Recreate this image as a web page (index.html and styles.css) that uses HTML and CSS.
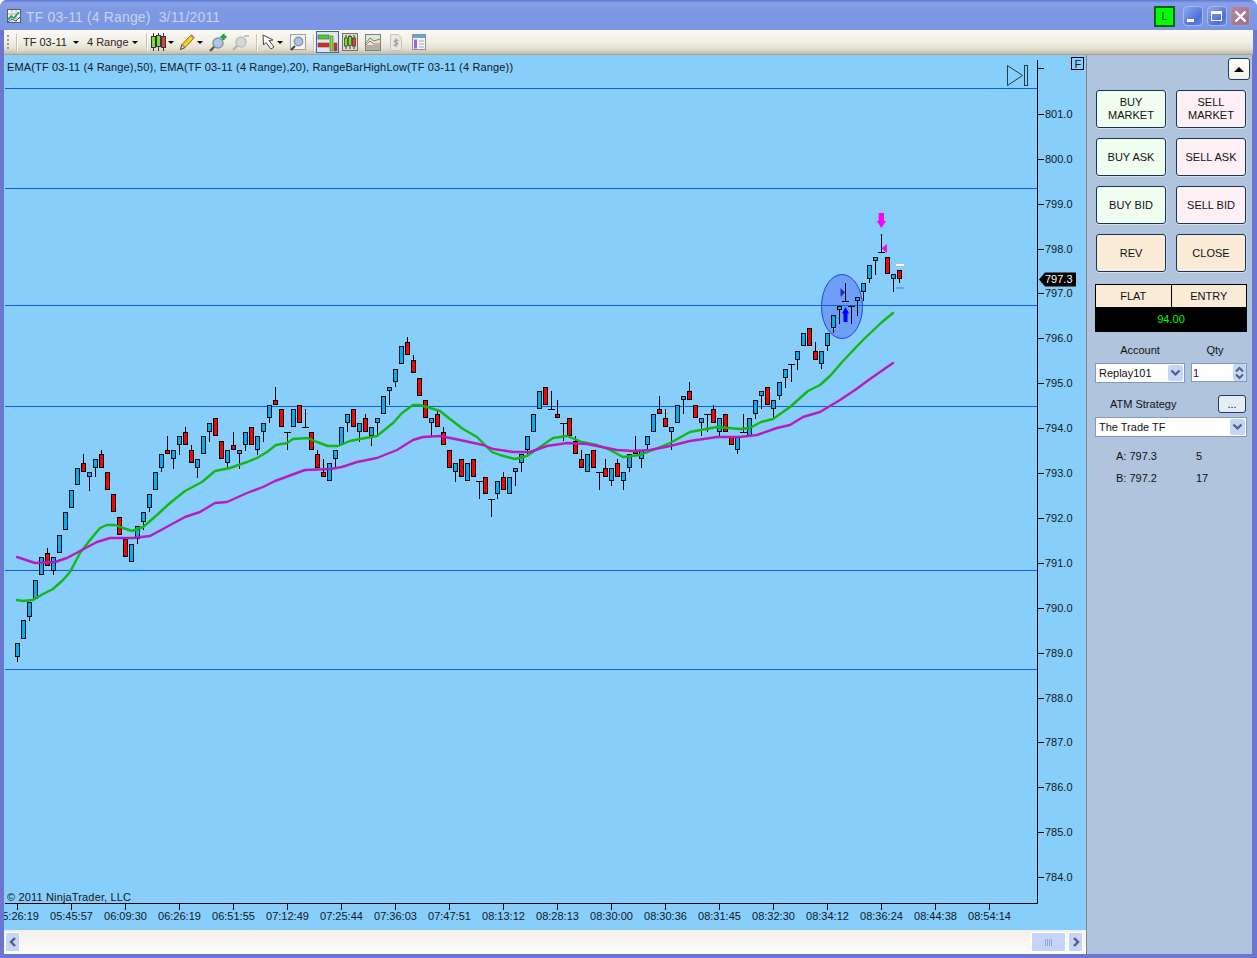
FILE: index.html
```html
<!DOCTYPE html>
<html lang="en">

<head>
    <meta charset="UTF-8">
    <title>TF 03-11 (4 Range) 3/11/2011</title>
    <link rel="stylesheet" href="styles.css">
</head>

<body>
    <div class="window">
        <div class="titleBar">
            <svg class="titleIcon" width="14" height="14" viewBox="0 0 14 14">
                <rect x="0.5" y="0.5" width="13" height="13" fill="#f4f4f0" stroke="#55606a" />
                <path d="M1 5H13M1 9H13M5 1V13M9 1V13" stroke="#b0b4c0" stroke-width="1" />
                <path d="M1 11L4 7L7 9L12 3" fill="none" stroke="#18a040" stroke-width="1.5" />
                <path d="M1 13L5 10L9 12L13 8" fill="none" stroke="#3050c0" stroke-width="1" />
            </svg>
            <span class="titleText">TF 03-11 (4 Range)&nbsp;&nbsp;3/11/2011</span>
            <div class="liveBox">L</div>
            <div class="captionBtn">
                <span class="minGlyph"></span>
            </div>
            <div class="captionBtn">
                <span class="maxGlyph"></span>
            </div>
            <div class="captionBtn closeBtn">
                <svg width="13" height="13" viewBox="0 0 13 13">
                    <path d="M1.5 1.5L11.5 11.5M11.5 1.5L1.5 11.5" stroke="#fff" stroke-width="2.4" />
                </svg>
            </div>
        </div>

        <div class="toolBar">
            <div class="grip"></div>
            <div class="toolSep sepFirst"></div>
            <span class="toolText instrument">TF 03-11</span>
            <span class="dropArrow"></span>
            <span class="toolText rangeText">4 Range</span>
            <span class="dropArrow"></span>
            <div class="toolSep sepSecond"></div>

            <svg class="tool candleTool" width="15" height="18" viewBox="0 0 15 18">
                <path d="M2.5 0V18M7.5 0V18M12.5 0V18" stroke="#333" />
                <rect x="0.5" y="3.5" width="4" height="11" fill="#7ce028" stroke="#335" />
                <rect x="5.5" y="2.5" width="4" height="11" fill="#7ce028" stroke="#335" />
                <rect x="10.5" y="3.5" width="4" height="11" fill="#e84020" stroke="#335" />
            </svg>
            <span class="dropArrow iconArrow"></span>

            <svg class="tool pencilTool" width="15" height="16" viewBox="0 0 15 16">
                <path d="M0.5 15.5L2 10.5L11 1L14 4L5 13.5Z" fill="#f8d020" stroke="#8a7410" />
                <path d="M0.5 15.5L2 10.5L5 13.5Z" fill="#f4dcb0" stroke="#555" />
                <path d="M11 1L14 4" stroke="#e07070" stroke-width="2" />
            </svg>
            <span class="dropArrow iconArrow"></span>

            <svg class="tool zoomInTool" width="18" height="19" viewBox="0 0 18 19">
                <path d="M1 18L6 13" stroke="#555" stroke-width="2.4" />
                <circle cx="9" cy="10" r="5" fill="#a8c8ee" stroke="#8a96a6" stroke-width="1.5" />
                <path d="M14.5 1V7M11.5 4H17.5" stroke="#10a830" stroke-width="2.4" />
            </svg>
            <svg class="tool zoomOutTool" width="17" height="17" viewBox="0 0 17 17">
                <path d="M1 16L6 11" stroke="#b4b4ae" stroke-width="2.4" />
                <circle cx="9" cy="8" r="5" fill="#d4d8d8" stroke="#c0c0ba" stroke-width="1.5" />
                <path d="M12 2H17" stroke="#c0c0ba" stroke-width="2" />
            </svg>
            <div class="toolSep sepThird"></div>

            <svg class="tool pointerTool" width="15" height="16" viewBox="0 0 15 16">
                <path d="M1 1L1.5 11L4 8.5L9 15L12 13L7 6.5L11 6Z" fill="#fff" stroke="#444" />
            </svg>
            <span class="dropArrow iconArrow"></span>

            <svg class="tool magnifyTool" width="16" height="17" viewBox="0 0 16 17">
                <rect x="0.5" y="0.5" width="15" height="15" fill="#f4f4f0" stroke="#a0a098" />
                <path d="M1 16L5 12" stroke="#444" stroke-width="2" />
                <circle cx="8.5" cy="7.5" r="4.2" fill="#a8c4ec" stroke="#8a96a6" stroke-width="1.4" />
            </svg>
            <div class="toolSep sepFourth"></div>

            <div class="toolSelected">
                <svg width="21" height="20" viewBox="0 0 21 20">
                    <rect x="1" y="3" width="11" height="4" fill="#40d030" stroke="#555" stroke-width="0.6" />
                    <rect x="1" y="11" width="11" height="4" fill="#e82020" stroke="#555" stroke-width="0.6" />
                    <rect x="13" y="4" width="3" height="15" fill="#7ce028" stroke="#555" stroke-width="0.6" />
                    <rect x="17" y="11" width="3" height="8" fill="#e82020" stroke="#555" stroke-width="0.6" />
                </svg>
            </div>
            <svg class="tool boxCandles" width="16" height="18" viewBox="0 0 16 18">
                <rect x="0.5" y="0.5" width="15" height="17" fill="#dcdcd4" stroke="#707068" />
                <path d="M4 2V16M8 2V16M12 2V16" stroke="#333" />
                <rect x="2.5" y="5" width="3" height="8" fill="#7ce028" stroke="#333" stroke-width="0.7" />
                <rect x="6.5" y="3.5" width="3" height="9" fill="#7ce028" stroke="#333" stroke-width="0.7" />
                <rect x="10.5" y="5" width="3" height="8" fill="#e84020" stroke="#333" stroke-width="0.7" />
            </svg>
            <svg class="tool boxLines" width="16" height="17" viewBox="0 0 16 17">
                <rect x="0.5" y="0.5" width="15" height="16" fill="#e4e4dc" stroke="#808078" />
                <rect x="1" y="11" width="14" height="5" fill="#b0b0a8" />
                <path d="M1 9L5 4L9 7L15 5" fill="none" stroke="#30b050" />
                <path d="M1 11L5 7L9 10L15 10" fill="none" stroke="#e06060" />
            </svg>
            <svg class="tool docTool" width="12" height="17" viewBox="0 0 12 17">
                <path d="M0.5 0.5H8L11.5 4V16.5H0.5Z" fill="#e8e8e2" stroke="#c4c4bc" />
                <path d="M8.5 6.5C5 5.5 3 7.5 6 8.5C9 9.5 7.5 12 3.5 11M6 4.5V13" fill="none" stroke="#a8a8a2" stroke-width="1.5" />
            </svg>
            <svg class="tool propsTool" width="14" height="16" viewBox="0 0 14 16">
                <rect x="0.5" y="0.5" width="13" height="15" fill="#f4f4f4" stroke="#8a92a0" />
                <rect x="1" y="1" width="12" height="3" fill="#60a8d8" />
                <rect x="2" y="5.5" width="3" height="9" fill="#a060e0" />
                <path d="M7 7H12M7 10H12M7 13H12" stroke="#a0a8b4" />
            </svg>
        </div>

        <div class="mainArea">
            <div class="chartColumn">
                <svg class="chart" width="1082" height="875" viewBox="4 55 1082 875">
                    <ellipse cx="842" cy="306.5" rx="20.5" ry="32" fill="#6e9ff6" stroke="#2444e0" stroke-width="1" />
                    <g id="levelLines"></g>
                    <g id="candles"></g>
                    <polyline class="emaGreen" id="emaGreen" points="" />
                    <polyline class="emaPurple" id="emaPurple" points="" />

                    <!-- signals -->
                    <path d="M843.5 322V313.5H842L845.5 307L849 313.5H847.5V322Z" fill="#0000ff" />
                    <path d="M840.5 288L845 292.5L840.5 297Z" fill="#1a2ccc" />
                    <path d="M878.7 213H884V221H886L881.4 228L876.8 221H878.7Z" fill="#ff00ff" />
                    <path d="M887 244V253L881.5 248.5Z" fill="#ff00ff" />
                    <rect x="896" y="264" width="8" height="2" fill="#fff" />
                    <rect x="896" y="287" width="8" height="2" fill="#6f9ff0" />

                    <text class="chartText legendText" x="7" y="71">EMA(TF 03-11 (4 Range),50), EMA(TF 03-11 (4 Range),20), RangeBarHighLow(TF 03-11 (4 Range))</text>
                    <text class="chartText legendText" x="7" y="901">© 2011 NinjaTrader, LLC</text>

                    <!-- skip to end + F box -->
                    <path d="M1007.5 65.5L1022.5 75.5L1007.5 85.5Z" fill="none" stroke="#1c3c50" />
                    <rect x="1024.5" y="65.5" width="3" height="20" fill="none" stroke="#1c3c50" />
                    <rect x="1071.5" y="57.5" width="12" height="12" fill="none" stroke="#000" />
                    <text class="chartText" x="1074.5" y="67.5" font-size="10">F</text>

                    <path d="M1037.5 60V903.5H5" fill="none" stroke="#000" />
                    <g id="priceAxis"></g>
                    <g id="timeAxis"></g>

                    <path d="M1039 279.5L1045 272.5H1076V286.5H1045Z" fill="#000" />
                    <text class="flagText" x="1045" y="283">797.3</text>
                </svg>
                <div class="scrollBar">
                    <div class="scrollBtn">
                        <svg width="8" height="10" viewBox="0 0 8 10">
                            <path d="M6 1L2 5L6 9" fill="none" stroke="#4d6185" stroke-width="2.4" />
                        </svg>
                    </div>
                    <div class="scrollThumb">
                        <svg width="10" height="7" viewBox="0 0 10 7">
                            <path d="M1.5 0V7M3.5 0V7M5.5 0V7M7.5 0V7" stroke="#8fa3d8" />
                        </svg>
                    </div>
                    <div class="scrollBtn scrollRight">
                        <svg width="8" height="10" viewBox="0 0 8 10">
                            <path d="M2 1L6 5L2 9" fill="none" stroke="#4d6185" stroke-width="2.4" />
                        </svg>
                    </div>
                </div>
            </div>

            <div class="sidePanel">
                <div class="collapseRow">
                    <div class="collapseBtn"><span class="upGlyph"></span></div>
                </div>
                <div class="orderGrid">
                    <div class="orderBtn buy">BUY<br>MARKET</div>
                    <div class="orderBtn sell">SELL<br>MARKET</div>
                    <div class="orderBtn buy">BUY ASK</div>
                    <div class="orderBtn sell">SELL ASK</div>
                    <div class="orderBtn buy">BUY BID</div>
                    <div class="orderBtn sell">SELL BID</div>
                    <div class="orderBtn misc">REV</div>
                    <div class="orderBtn misc">CLOSE</div>
                </div>

                <div class="positionBox">
                    <div class="positionHead">
                        <div class="posCell">FLAT</div>
                        <div class="posCell">ENTRY</div>
                    </div>
                    <div class="positionPnl">94.00</div>
                </div>

                <div class="labelRow">
                    <div class="accountLabel">Account</div>
                    <div class="qtyLabel">Qty</div>
                </div>
                <div class="fieldRow">
                    <div class="combo accountCombo">
                        <span class="comboText">Replay101</span>
                        <span class="comboArrow">
                            <svg width="11" height="8" viewBox="0 0 11 8">
                                <path d="M1.5 1.5L5.5 5.5L9.5 1.5" fill="none" stroke="#4d6185" stroke-width="2.2" />
                            </svg>
                        </span>
                    </div>
                    <div class="combo qtyCombo">
                        <span class="comboText qtyText">1</span>
                        <span class="spinArrows">
                            <svg width="11" height="16" viewBox="0 0 11 16">
                                <path d="M2 6.5L5.5 3L9 6.5M2 9.5L5.5 13L9 9.5" fill="none" stroke="#4d6185" stroke-width="2" />
                            </svg>
                        </span>
                    </div>
                </div>

                <div class="atmRow">
                    <div class="atmLabel">ATM Strategy</div>
                    <div class="moreBtn">...</div>
                </div>
                <div class="combo atmCombo">
                    <span class="comboText">The Trade TF</span>
                    <span class="comboArrow">
                        <svg width="11" height="8" viewBox="0 0 11 8">
                            <path d="M1.5 1.5L5.5 5.5L9.5 1.5" fill="none" stroke="#4d6185" stroke-width="2.2" />
                        </svg>
                    </span>
                </div>

                <div class="quoteBlock">
                    <div class="quoteRow"><span class="quotePrice">A: 797.3</span><span>5</span></div>
                    <div class="quoteRow"><span class="quotePrice">B: 797.2</span><span>17</span></div>
                </div>
            </div>
        </div>
    </div>

    <script src="chart.js"></script>
</body>

</html>
```

FILE: styles.css
```css
html,
body {
    margin: 0;
    padding: 0;
    background: #fff;
    overflow: hidden;
}

body {
    font-family: "Liberation Sans", Arial, sans-serif;
    font-size: 11px;
    color: #111;
}

.window {
    width: 1257px;
    height: 958px;
    box-sizing: border-box;
    padding: 0 4px 4px;
    display: flex;
    flex-direction: column;
    background: #6a76d0;
    border-radius: 7px 7px 0 0;
}

.titleBar {
    height: 30px;
    box-sizing: border-box;
    margin: 0 -4px;
    padding: 2px 7px 0;
    display: flex;
    align-items: center;
    flex: none;
    border-radius: 7px 7px 0 0;
    background: linear-gradient(#5c78d8 0, #88a2e8 3px, #7e99e2 10px, #7b97e4 100%);
}

.titleIcon {
    margin-right: 5px;
    flex: none;
}

.titleText {
    margin-top: 2px;
    font-size: 14px;
    letter-spacing: 0.15px;
    color: #c6d3f2;
    white-space: nowrap;
    flex: 1;
}

.liveBox {
    width: 21px;
    height: 21px;
    box-sizing: border-box;
    margin-right: 4.5px;
    border: 2px solid #0b6014;
    background: #00ff00;
    color: #033;
    font-size: 11px;
    line-height: 17px;
    text-align: center;
}

.captionBtn {
    width: 20px;
    height: 20px;
    box-sizing: border-box;
    margin-left: 3.5px;
    display: flex;
    align-items: center;
    justify-content: center;
    position: relative;
    border: 1px solid #a6b8f0;
    border-radius: 4px;
    background: linear-gradient(135deg, #8ea8f0, #4f70d8 70%, #6a88e4);
}

.closeBtn {
    background: linear-gradient(135deg, #b08aa8, #a06e84);
    border-color: #a89ac0;
}

.minGlyph {
    width: 7px;
    height: 3px;
    background: #fff;
    align-self: flex-end;
    margin: 0 5px 3px 0;
}

.maxGlyph {
    width: 11px;
    height: 10px;
    box-sizing: border-box;
    border: 1px solid #fff;
    border-top-width: 3px;
}

.toolBar {
    height: 25px;
    flex: none;
    display: flex;
    align-items: center;
    box-sizing: border-box;
    padding-bottom: 1px;
    background: linear-gradient(#fbfaf6 0, #f2efe6 45%, #e4e0d2 75%, #c0bca8 96%, #8d8b7e 100%);
}

.grip {
    width: 2px;
    height: 15px;
    margin-left: 3px;
    background: repeating-linear-gradient(#9a9a90 0, #9a9a90 2px, transparent 2px, transparent 4px);
}

.toolSep {
    width: 1px;
    height: 17px;
    background: #fff;
    border-left: 1px solid #c8c4b4;
    flex: none;
}

.sepFirst {
    margin-left: 7px;
}

.sepSecond {
    margin-left: 8px;
}

.sepThird {
    margin-left: 7px;
}

.sepFourth {
    margin-left: 7px;
}

.toolText {
    white-space: nowrap;
    color: #222;
}

.instrument {
    margin-left: 5px;
    width: 45px;
}

.rangeText {
    margin-left: 8px;
    width: 40px;
    color: #322;
}

.dropArrow {
    width: 0;
    height: 0;
    margin-left: 5px;
    flex: none;
    border-left: 3px solid transparent;
    border-right: 3px solid transparent;
    border-top: 3px solid #000;
}

.iconArrow {
    margin-left: 2px;
}

.tool {
    flex: none;
}

.candleTool {
    margin-left: 3px;
}

.pencilTool {
    margin-left: 6px;
}

.zoomInTool {
    margin-left: 6px;
}

.zoomOutTool {
    margin-left: 5px;
}

.pointerTool {
    margin: 0 -2px 0 4px;
}

.magnifyTool {
    margin-left: 7px;
}

.toolSelected {
    width: 23px;
    height: 22px;
    box-sizing: border-box;
    margin-left: 1px;
    flex: none;
    display: flex;
    align-items: center;
    justify-content: center;
    border: 1px solid #2a6cc0;
    background: #e2e6ea;
}

.boxCandles {
    margin-left: 3px;
}

.boxLines {
    margin-left: 7px;
}

.docTool {
    margin-left: 9px;
}

.propsTool {
    margin-left: 10px;
}

.mainArea {
    flex: 1;
    display: flex;
    min-height: 0;
}

.chartColumn {
    width: 1082px;
    flex: none;
    display: flex;
    flex-direction: column;
}

.chart {
    display: block;
    background: #87cefa;
    flex: none;
}

.chartText {
    font-family: "Liberation Sans", Arial, sans-serif;
    font-size: 11px;
    fill: #10181c;
}

.legendText {
    letter-spacing: 0.155px;
}

.flagText {
    font-family: "Liberation Sans", Arial, sans-serif;
    font-size: 11px;
    fill: #fff;
}

.tickLine {
    stroke: #000;
    stroke-width: 1;
    shape-rendering: crispEdges;
}

.levelLine {
    stroke: #0a5ce0;
    stroke-width: 1;
    shape-rendering: crispEdges;
}

.emaGreen,
.emaPurple {
    fill: none;
    stroke-width: 2.4;
    stroke-linejoin: round;
    stroke-linecap: round;
}

.emaGreen {
    stroke: #12b814;
}

.emaPurple {
    stroke: #b81cc0;
}

.candleBody {
    stroke: #000;
    stroke-width: 1;
    shape-rendering: crispEdges;
}

.scrollBar {
    flex: 1;
    display: flex;
    align-items: center;
    padding: 0 3px 0 1px;
    box-sizing: border-box;
    background: linear-gradient(#f2f0e8, #faf9f5 70%, #fff);
}

.scrollBtn {
    width: 15px;
    height: 20px;
    box-sizing: border-box;
    display: flex;
    align-items: center;
    justify-content: center;
    border: 1px solid #fff;
    border-radius: 2px;
    background: #c6d4fa;
}

.scrollThumb {
    width: 35px;
    height: 20px;
    margin-left: auto;
    box-sizing: border-box;
    display: flex;
    align-items: center;
    justify-content: center;
    border: 1px solid #fff;
    border-radius: 2px;
    background: #c6d4fa;
}

.scrollRight {
    margin-left: 2px;
}

.sidePanel {
    width: 166px;
    flex: none;
    box-sizing: border-box;
    margin-right: 1px;
    padding: 3px 0 0 8px;
    border-left: 1px solid #7c8488;
    background: #b0c4de;
    color: #111;
}

.collapseRow {
    display: flex;
    justify-content: flex-end;
    padding-right: 2px;
}

.collapseBtn {
    width: 22px;
    height: 22px;
    box-sizing: border-box;
    display: flex;
    align-items: center;
    justify-content: center;
    border: 1px solid #1c3c60;
    border-radius: 3px;
    background: linear-gradient(#fff, #f4efe4);
}

.upGlyph {
    width: 0;
    height: 0;
    border-left: 5px solid transparent;
    border-right: 5px solid transparent;
    border-bottom: 5px solid #000;
}

.orderGrid {
    margin: 10px 0 0 1px;
    display: grid;
    grid-template-columns: 70px 70px;
    grid-auto-rows: 38px;
    gap: 10px;
}

.orderBtn {
    box-sizing: border-box;
    display: flex;
    align-items: center;
    justify-content: center;
    text-align: center;
    line-height: 13px;
    border: 1px solid #12365c;
    border-radius: 3px;
    box-shadow: 0 1px 0 #d4e0ee, 1px 0 0 #c8d6e8;
}

.buy {
    background: #f0fff0;
}

.sell {
    background: #fff0f5;
}

.misc {
    background: #faebd7;
}

.positionBox {
    width: 152px;
    margin-top: 12px;
    box-sizing: border-box;
    border: 1px solid #000;
}

.positionHead {
    display: flex;
    height: 22px;
    background: #faebd7;
}

.posCell {
    flex: 1;
    line-height: 22px;
    text-align: center;
}

.posCell + .posCell {
    border-left: 1px solid #000;
}

.positionPnl {
    height: 24px;
    line-height: 24px;
    text-align: center;
    background: #000;
    color: #00ff00;
}

.labelRow {
    display: flex;
    margin-top: 11px;
    line-height: 14px;
}

.accountLabel {
    width: 90px;
    text-align: center;
}

.qtyLabel {
    width: 62px;
    padding-right: 2px;
    box-sizing: border-box;
    text-align: center;
}

.fieldRow {
    display: flex;
    align-items: flex-start;
    margin-top: 6px;
    gap: 6px;
}

.combo {
    height: 20px;
    box-sizing: border-box;
    display: flex;
    align-items: center;
    border: 1px solid #7f9db9;
    background: #fff;
}

.comboText {
    flex: 1;
    padding-left: 3px;
    white-space: nowrap;
}

.comboArrow {
    width: 15px;
    height: 16px;
    margin-right: 1px;
    display: flex;
    align-items: center;
    justify-content: center;
    border-radius: 2px;
    background: #c6d4f6;
}

.accountCombo {
    width: 90px;
}

.qtyCombo {
    width: 56px;
    height: 19px;
}

.qtyText {
    padding-left: 1px;
    color: #406;
}

.spinArrows {
    width: 13px;
    height: 17px;
    display: flex;
    align-items: center;
    justify-content: center;
    border-radius: 2px;
    background: #c6d4f6;
}

.atmRow {
    display: flex;
    align-items: center;
    margin-top: 12px;
    height: 18px;
    padding-left: 15px;
}

.atmLabel {
    flex: 1;
}

.moreBtn {
    width: 28px;
    height: 18px;
    box-sizing: border-box;
    margin-right: 6px;
    border: 1px solid #1c3c60;
    border-radius: 3px;
    background: #e4ecf4;
    text-align: center;
    line-height: 16px;
}

.atmCombo {
    width: 152px;
    margin-top: 4px;
}

.quoteBlock {
    margin-top: 8px;
    padding-left: 21px;
}

.quoteRow {
    display: flex;
    height: 22px;
    align-items: center;
}

.quotePrice {
    width: 80px;
}
```

FILE: chart.js
```js
var NS = "http://www.w3.org/2000/svg";

// type, body top, body bottom, wick top, wick bottom (0 = none)
var bars = [
    "b 643 657 0 662", "b 620 639", "b 602 617 0 621", "b 580 599", "b 557 575",
    "r 553 566 548 0", "b 557 571 0 575", "b 535 553", "b 512 530", "b 490 508",
    "b 468 485", "r 463 472 454 0", "b 472 477 0 491", "b 459 468 0 477", "r 454 468 450 0",
    "r 472 490", "r 494 512", "r 517 535", "r 539 557", "b 544 562",
    "b 526 539 0 544", "b 512 522 0 530", "b 494 508 0 512", "b 472 490", "b 454 468 0 472",
    "r 450 454 436 0", "b 450 459 0 469", "b 436 445 0 455", "r 432 445 427 0", "r 450 463 445 0",
    "b 459 468 0 478", "b 436 454", "b 423 432 0 442", "r 418 436", "r 441 459",
    "b 450 463 0 468", "r 445 450 432 0", "b 450 454 0 469", "b 432 445 0 451", "r 427 445",
    "b 436 450 0 455", "b 423 432 0 442", "b 405 418 0 423", "r 400 405 387 0", "r 409 427",
    "d 432 432 0 450", "b 409 427", "r 405 423", "d 427 427 409 0", "r 432 450",
    "r 454 468 450 0", "r 472 477 459 0", "b 463 481", "b 450 459 0 468", "b 427 445",
    "b 414 423 0 432", "r 409 427", "b 423 432 0 442", "r 418 432 414 0", "b 427 436 0 446",
    "b 418 423 0 435", "b 396 414", "b 387 391 0 405", "b 369 382 0 387", "b 346 364",
    "r 342 355 337 0", "r 360 373 355 0", "r 378 396", "r 400 418", "b 418 423 0 436",
    "r 414 427 410 0", "r 432 445 427 0", "r 450 468", "b 463 472 0 482", "r 459 477",
    "b 463 481", "r 459 477", "d 481 481 0 499", "r 477 494", "d 499 499 0 517",
    "b 481 494 0 499", "r 477 490 472 0", "b 477 494", "b 468 472 0 486", "b 454 463 0 472",
    "b 436 450 0 454", "b 414 432", "b 391 409", "r 387 405", "d 409 409 391 0",
    "r 414 418 400 0", "d 423 423 0 441", "r 418 436", "r 441 454 436 0", "r 459 468 450 0",
    "b 454 472", "r 450 468", "d 472 472 0 490", "r 468 477 459 0", "b 468 481 0 486",
    "r 463 477 459 0", "b 472 481 0 490", "b 454 468 0 472", "r 450 454 436 0", "b 450 459 0 468",
    "b 436 445 0 450", "b 414 432", "r 409 414 396 0", "r 418 427 409 0", "b 427 432 0 450",
    "b 405 423", "b 396 400 0 414", "r 391 400 382 0", "r 405 418", "b 418 423 0 436",
    "d 414 414 0 432", "r 409 423 405 0", "b 418 432 0 436", "r 414 432", "r 436 445",
    "b 436 450 0 454", "d 432 432 414 0", "b 418 436", "b 400 414 0 419", "b 391 396 0 409",
    "r 387 405", "b 400 409 0 418", "b 382 396 0 400", "b 369 378 0 388", "d 364 364 0 382",
    "b 351 360 0 370", "b 333 346", "r 328 346", "r 351 360 342 0", "b 351 364 0 369",
    "b 333 346 0 351", "b 315 328 0 333", "b 306 310 0 324", "d 301 301 283 0", "d 306 306 0 324",
    "b 297 301 0 316", "b 283 292 0 301", "b 265 279 0 283", "b 257 261 0 275", "d 252 252 234 0",
    "r 257 274", "b 274 279 0 292", "r 270 279 0 283"
];

var greenLine = [
    [17, 600], [23, 601], [33, 600], [43, 594], [53, 589], [63, 580], [70, 572], [80, 553], [90, 540],
    [100, 528], [107, 525], [115, 525], [123, 528], [132, 531], [143, 527], [157, 515], [170, 503],
    [185, 491], [202, 482], [215, 471], [230, 468], [247, 462], [257, 458], [267, 452], [276, 445],
    [287, 443], [293, 439], [308, 438], [317, 442], [328, 446], [338, 446], [350, 441], [360, 439],
    [377, 436], [393, 423], [402, 413], [413, 405], [420, 405], [440, 411], [450, 419], [463, 429],
    [477, 437], [492, 452], [500, 455], [515, 459], [527, 456], [540, 447], [553, 438], [567, 436],
    [582, 442], [597, 445], [610, 450], [623, 457], [640, 455], [653, 450], [670, 443], [690, 432],
    [717, 427], [740, 429], [750, 428], [761, 422], [773, 419], [790, 407], [808, 391], [820, 385],
    [830, 376], [843, 361], [863, 340], [882, 322], [893, 313]
];

var purpleLine = [
    [17, 557], [35, 563], [55, 562], [67, 558], [80, 551], [97, 542], [110, 538], [133, 538], [150, 536],
    [185, 517], [200, 512], [215, 503], [227, 502], [247, 493], [263, 487], [275, 481], [305, 470],
    [330, 469], [342, 467], [357, 462], [377, 458], [397, 450], [413, 440], [423, 437], [440, 436],
    [460, 440], [483, 445], [493, 449], [513, 452], [530, 452], [547, 446], [567, 443], [587, 444],
    [617, 450], [633, 451], [650, 450], [670, 446], [690, 441], [717, 437], [740, 437], [757, 435],
    [777, 428], [790, 425], [803, 417], [820, 412], [840, 400], [855, 390], [870, 379], [893, 363]
];

var times = ["05:26:19", "05:45:57", "06:09:30", "06:26:19", "06:51:55", "07:12:49", "07:25:44",
    "07:36:03", "07:47:51", "08:13:12", "08:28:13", "08:30:00", "08:30:36", "08:31:45",
    "08:32:30", "08:34:12", "08:36:24", "08:44:38", "08:54:14"];

// tick rows of 801.0 down to 784.0
var priceRows = [114, 159, 204, 249, 293, 338, 383, 428, 473, 518, 563, 608, 653, 698, 742, 787, 832, 877];

function add(parent, tag, attrs, text) {
    var el = document.createElementNS(NS, tag);
    for (var key in attrs) {
        el.setAttribute(key, attrs[key]);
    }
    if (text) {
        el.textContent = text;
    }
    parent.appendChild(el);
    return el;
}

function drawLevels() {
    var box = document.getElementById("levelLines");
    [88.5, 188.5, 305.5, 406.5, 570.5, 669.5].forEach(function (y) {
        add(box, "line", { "class": "levelLine", x1: 5, x2: 1037, y1: y, y2: y });
    });
}

function drawCandles() {
    var box = document.getElementById("candles");
    bars.forEach(function (row, i) {
        var p = row.split(" ");
        var top = +p[1], bottom = +p[2], wickTop = +p[3] || 0, wickBottom = +p[4] || 0;
        var x = 17.5 + i * 6;
        if (wickTop) {
            add(box, "line", { "class": "tickLine", x1: x, x2: x, y1: wickTop, y2: top });
        }
        if (wickBottom) {
            add(box, "line", { "class": "tickLine", x1: x, x2: x, y1: bottom, y2: wickBottom });
        }
        if (p[0] == "d") {
            add(box, "line", { "class": "tickLine", x1: x - 3.5, x2: x + 3.5, y1: top + 0.5, y2: top + 0.5 });
        } else {
            add(box, "rect", {
                "class": "candleBody",
                x: x - 2,
                y: top + 0.5,
                width: 4,
                height: bottom - top - 1,
                fill: p[0] == "b" ? "#00b0f0" : "#ff0000"
            });
        }
    });
}

function drawEma(id, points) {
    document.getElementById(id).setAttribute("points", points.map(function (pt) {
        return pt[0] + "," + pt[1];
    }).join(" "));
}

function drawAxes() {
    var prices = document.getElementById("priceAxis");
    add(prices, "line", { "class": "tickLine", x1: 1038, x2: 1044, y1: 68.5, y2: 68.5 });
    priceRows.forEach(function (row, i) {
        var y = row + 0.5;
        add(prices, "line", { "class": "tickLine", x1: 1038, x2: 1044, y1: y, y2: y });
        add(prices, "text", { "class": "chartText", x: 1045, y: y + 3.5 }, (801 - i).toFixed(1));
    });

    var axis = document.getElementById("timeAxis");
    times.forEach(function (label, i) {
        var x = 17.5 + i * 54;
        add(axis, "line", { "class": "tickLine", x1: x, x2: x, y1: 904, y2: 910 });
        add(axis, "text", { "class": "chartText", x: x, y: 920, "text-anchor": "middle" }, label);
    });
}

drawLevels();
drawCandles();
drawEma("emaGreen", greenLine);
drawEma("emaPurple", purpleLine);
drawAxes();
```
